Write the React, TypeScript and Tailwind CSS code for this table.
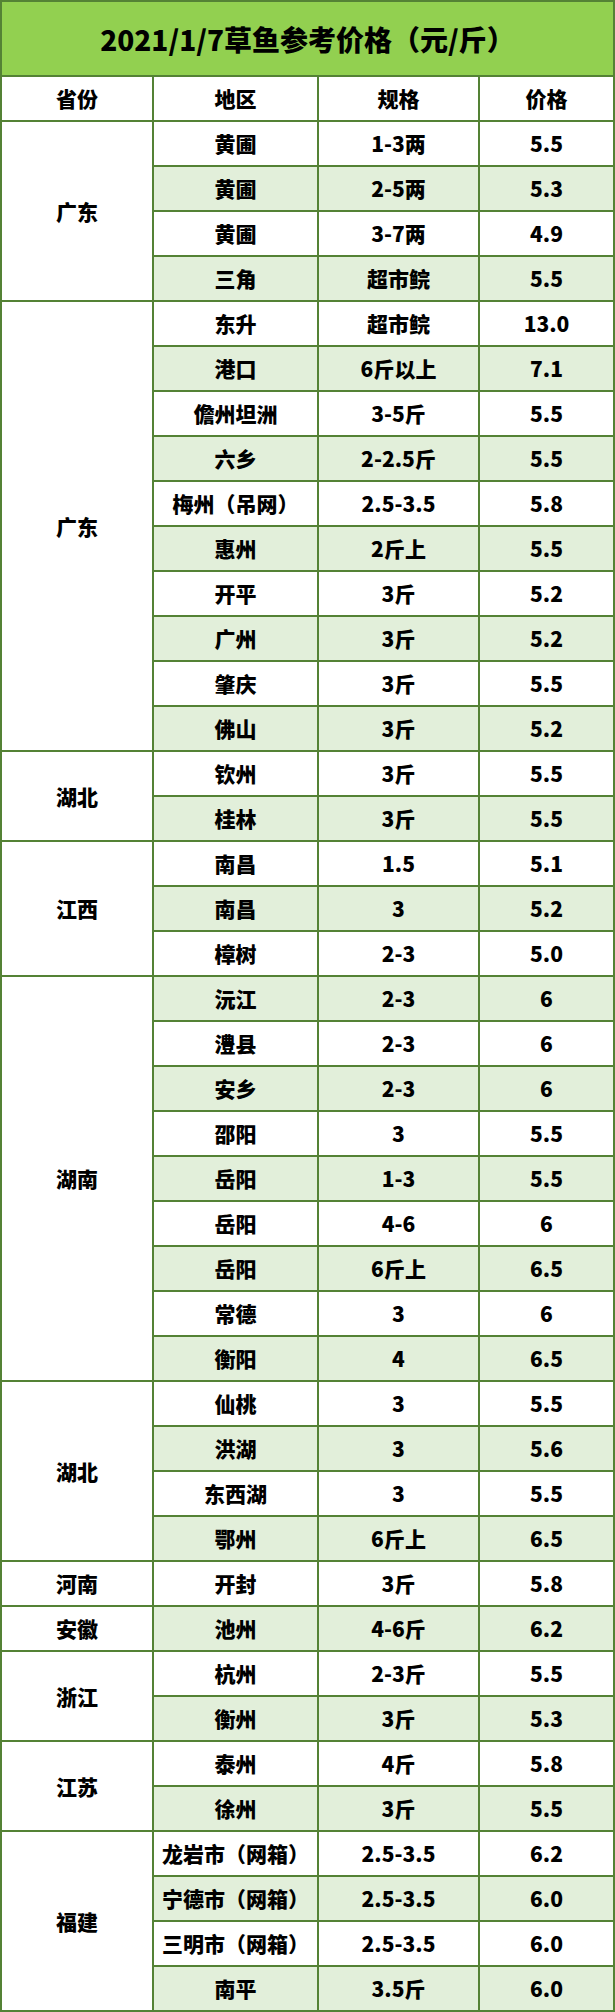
import React from 'react';

interface Row {
  area: string;
  spec: string;
  price: string;
}

interface Group {
  province: string;
  rows: Row[];
}

const groups: Group[] = [
  {
    province: '广东',
    rows: [
      { area: '黄圃', spec: '1-3两', price: '5.5' },
      { area: '黄圃', spec: '2-5两', price: '5.3' },
      { area: '黄圃', spec: '3-7两', price: '4.9' },
      { area: '三角', spec: '超市鲩', price: '5.5' },
    ],
  },
  {
    province: '广东',
    rows: [
      { area: '东升', spec: '超市鲩', price: '13.0' },
      { area: '港口', spec: '6斤以上', price: '7.1' },
      { area: '儋州坦洲', spec: '3-5斤', price: '5.5' },
      { area: '六乡', spec: '2-2.5斤', price: '5.5' },
      { area: '梅州（吊网）', spec: '2.5-3.5', price: '5.8' },
      { area: '惠州', spec: '2斤上', price: '5.5' },
      { area: '开平', spec: '3斤', price: '5.2' },
      { area: '广州', spec: '3斤', price: '5.2' },
      { area: '肇庆', spec: '3斤', price: '5.5' },
      { area: '佛山', spec: '3斤', price: '5.2' },
    ],
  },
  {
    province: '湖北',
    rows: [
      { area: '钦州', spec: '3斤', price: '5.5' },
      { area: '桂林', spec: '3斤', price: '5.5' },
    ],
  },
  {
    province: '江西',
    rows: [
      { area: '南昌', spec: '1.5', price: '5.1' },
      { area: '南昌', spec: '3', price: '5.2' },
      { area: '樟树', spec: '2-3', price: '5.0' },
    ],
  },
  {
    province: '湖南',
    rows: [
      { area: '沅江', spec: '2-3', price: '6' },
      { area: '澧县', spec: '2-3', price: '6' },
      { area: '安乡', spec: '2-3', price: '6' },
      { area: '邵阳', spec: '3', price: '5.5' },
      { area: '岳阳', spec: '1-3', price: '5.5' },
      { area: '岳阳', spec: '4-6', price: '6' },
      { area: '岳阳', spec: '6斤上', price: '6.5' },
      { area: '常德', spec: '3', price: '6' },
      { area: '衡阳', spec: '4', price: '6.5' },
    ],
  },
  {
    province: '湖北',
    rows: [
      { area: '仙桃', spec: '3', price: '5.5' },
      { area: '洪湖', spec: '3', price: '5.6' },
      { area: '东西湖', spec: '3', price: '5.5' },
      { area: '鄂州', spec: '6斤上', price: '6.5' },
    ],
  },
  { province: '河南', rows: [{ area: '开封', spec: '3斤', price: '5.8' }] },
  { province: '安徽', rows: [{ area: '池州', spec: '4-6斤', price: '6.2' }] },
  {
    province: '浙江',
    rows: [
      { area: '杭州', spec: '2-3斤', price: '5.5' },
      { area: '衡州', spec: '3斤', price: '5.3' },
    ],
  },
  {
    province: '江苏',
    rows: [
      { area: '泰州', spec: '4斤', price: '5.8' },
      { area: '徐州', spec: '3斤', price: '5.5' },
    ],
  },
  {
    province: '福建',
    rows: [
      { area: '龙岩市（网箱）', spec: '2.5-3.5', price: '6.2' },
      { area: '宁德市（网箱）', spec: '2.5-3.5', price: '6.0' },
      { area: '三明市（网箱）', spec: '2.5-3.5', price: '6.0' },
      { area: '南平', spec: '3.5斤', price: '6.0' },
    ],
  },
];

const cell = 'flex items-center justify-center text-[21px] font-black text-black leading-none';

export default function App() {
  let index = 0;

  return (
    <div
      className="w-[615px] bg-white"
      style={{ fontFamily: '"Noto Sans CJK SC", "Noto Sans", sans-serif' }}
    >
      <div className="grid grid-cols-[150px_163px_159px_133px] grid-rows-[73px] auto-rows-[43px] gap-[2px] p-[2px] bg-[#548235]">
        {/* Title */}
        <div className="col-span-4 bg-[#92d050] flex items-center justify-center text-[28px] font-black text-black leading-none">
          2021/1/7草鱼参考价格（元/斤）
        </div>

        {/* Header */}
        <div className={`${cell} bg-white`}>省份</div>
        <div className={`${cell} bg-white`}>地区</div>
        <div className={`${cell} bg-white`}>规格</div>
        <div className={`${cell} bg-white`}>价格</div>

        {groups.map((group, g) => (
          <React.Fragment key={g}>
            <div
              className={`${cell} bg-white`}
              style={{ gridRow: `span ${group.rows.length}` }}
            >
              {group.province}
            </div>
            {group.rows.map((row, r) => {
              const bg = index++ % 2 === 1 ? 'bg-[#e2efda]' : 'bg-white';
              return (
                <React.Fragment key={r}>
                  <div className={`${cell} ${bg}`}>{row.area}</div>
                  <div className={`${cell} ${bg}`}>{row.spec}</div>
                  <div className={`${cell} ${bg}`}>{row.price}</div>
                </React.Fragment>
              );
            })}
          </React.Fragment>
        ))}
      </div>
    </div>
  );
}
